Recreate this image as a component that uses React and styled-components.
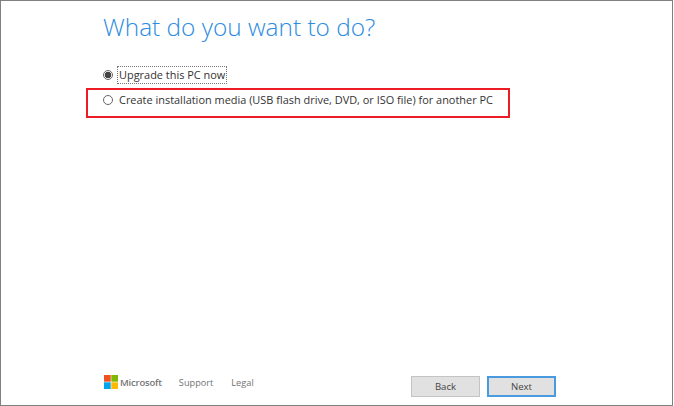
import React from "react";
import styled, { createGlobalStyle } from "styled-components";

const GlobalStyle = createGlobalStyle`
  html, body {
    margin: 0;
    padding: 0;
    background: #fff;
  }
`;

const App = () => {
  return (
    <>
      <GlobalStyle />
      <Frame>
        <Title>What do you want to do?</Title>
        <Options>
          <Option>
            <Radio $checked />
            <FocusLabel>Upgrade this PC now</FocusLabel>
          </Option>
          <HighlightOption>
            <Radio />
            <span>Create installation media (USB flash drive, DVD, or ISO file) for another PC</span>
          </HighlightOption>
        </Options>
        <Footer>
          <Brand>
            <LogoSvg viewBox="0 0 14 14">
              <rect x="0" y="0" width="6.7" height="6.7" fill="#f25022" />
              <rect x="7.3" y="0" width="6.7" height="6.7" fill="#7fba00" />
              <rect x="0" y="7.3" width="6.7" height="6.7" fill="#00a4ef" />
              <rect x="7.3" y="7.3" width="6.7" height="6.7" fill="#ffb900" />
            </LogoSvg>
            <BrandName>Microsoft</BrandName>
          </Brand>
          <FooterLink $left={17}>Support</FooterLink>
          <FooterLink $left={18}>Legal</FooterLink>
          <Buttons>
            <Button>Back</Button>
            <Button $primary>Next</Button>
          </Buttons>
        </Footer>
      </Frame>
    </>
  );
};

const Frame = styled.div`
  box-sizing: border-box;
  width: 673px;
  height: 406px;
  border: 1px solid #808080;
  background: #fff;
  display: flex;
  flex-direction: column;
  font-family: "Open Sans", "Liberation Sans", sans-serif;
  overflow: hidden;
`;

const Title = styled.h1`
  margin: 8px 0 0 102px;
  font-size: 24.4px;
  line-height: 36px;
  font-weight: 300;
  color: #2b8ce0;
  white-space: nowrap;
`;

const Options = styled.div`
  margin: 20px 0 0 85px;
  display: flex;
  flex-direction: column;
  gap: 3px;
  font-size: 10.95px;
  color: #333;
`;

const Option = styled.div`
  display: flex;
  align-items: center;
  gap: 6px;
  height: 20px;
  padding-left: 17px;
`;

const HighlightOption = styled(Option)`
  box-sizing: border-box;
  width: 424px;
  height: 30px;
  border: 2px solid #ed1c24;
  padding: 0 0 7px 15px;
`;

const FocusLabel = styled.span`
  outline: 1px dotted #777;
  line-height: 16px;
  padding: 0 1px;
  margin-left: -1px;
`;

const Radio = styled.span`
  box-sizing: border-box;
  flex: none;
  width: 10px;
  height: 10px;
  border-radius: 50%;
  border: 1px solid #666;
  background: ${(p) => (p.$checked ? "radial-gradient(circle, #444 0 3px, #fff 3.6px)" : "#fff")};
`;

const Footer = styled.div`
  margin-top: auto;
  padding: 0 0 8px 103px;
  display: flex;
  align-items: flex-start;
  font-size: 9.2px;
  color: #737373;
`;

const Brand = styled.div`
  display: flex;
  align-items: center;
  gap: 2px;
  height: 14px;
`;

const LogoSvg = styled.svg`
  width: 14px;
  height: 14px;
  display: block;
`;

const BrandName = styled.span`
  font-size: 9.5px;
  font-weight: 600;
  letter-spacing: -0.2px;
  color: #757575;
`;

const FooterLink = styled.span`
  margin-left: ${(p) => p.$left}px;
  line-height: 16px;
`;

const Buttons = styled.div`
  margin: 1px 116px 0 auto;
  display: flex;
  gap: 7px;
`;

const Button = styled.div`
  box-sizing: border-box;
  width: 69px;
  height: 21px;
  display: flex;
  align-items: center;
  justify-content: center;
  background: #e1e1e1;
  border: ${(p) => (p.$primary ? "2px solid #4a9ae0" : "1px solid #c4c4c4")};
  font-size: 9.6px;
  color: #444;
`;

export default App;
